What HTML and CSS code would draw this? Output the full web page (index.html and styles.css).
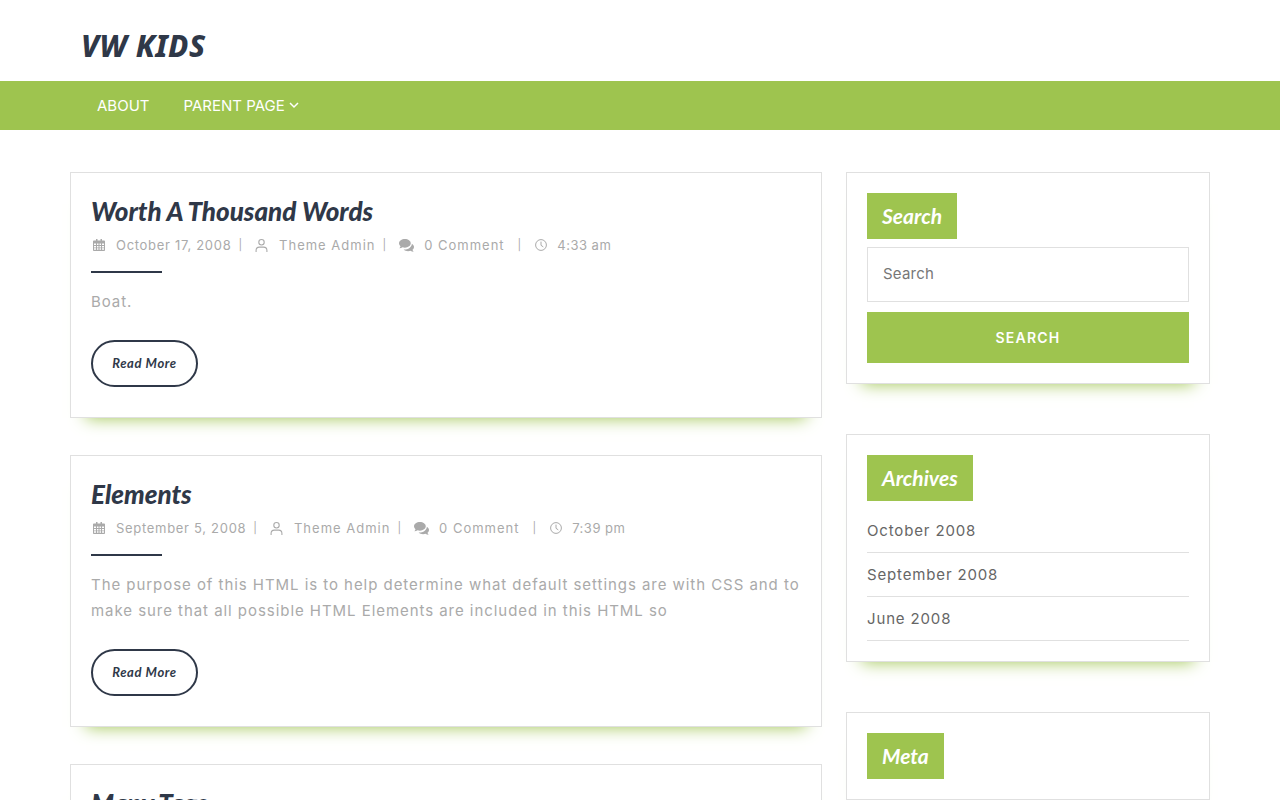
FILE: index.html
```html
<!DOCTYPE html>
<html lang="en">
<head>
    <meta charset="UTF-8">
    <meta name="viewport" content="width=device-width, initial-scale=1.0">
    <title>VW KIDS</title>
    <link rel="stylesheet" href="styles.css">
</head>
<body>
    <svg class="icon-defs" width="0" height="0">
        <symbol id="i-cal" viewBox="0 0 12 12"><path fill="currentColor" d="M3 0h1.5v1.5h3V0H9v1.5h2.2c.4 0 .8.4.8.8v8.9c0 .4-.4.8-.8.8H.8c-.4 0-.8-.4-.8-.8V2.300c0-.4.4-.8.8-.8H3zM1 4.500v1.500h2V4.500zm3 0v1.500h1.500V4.500zm2.500 0v1.500H8V4.500zm2.500 0v1.500h2V4.500zM1 7v1.500h2V7zm3 0v1.500h1.500V7zm2.500 0v1.500H8V7zM9 7v1.500h2V7zM1 9.300v1.500h2V9.300zm3 0v1.500h1.500V9.300zm2.500 0v1.500H8V9.300zm2.500 0v1.500h2V9.300z"/></symbol>
        <symbol id="i-user" viewBox="0 0 12 12"><g fill="none" stroke="currentColor" stroke-width="1"><circle cx="6" cy="3" r="2.500"/><path d="M1 12V10.500C1 8.800 2.300 7.500 4 7.500H8C9.700 7.500 11 8.800 11 10.500V12"/></g></symbol>
        <symbol id="i-comment" viewBox="0 0 14 12"><path fill="currentColor" d="M5.500 0C8.500 0 11 1.800 11 4s-2.500 4-5.500 4c-.8 0-1.500-.1-2.200-.4C2.500 8.200 1.400 8.600.3 8.600c.6-.6 1-1.300 1.100-2C.5 5.900 0 5 0 4c0-2.200 2.500-4 5.500-4z"/><path fill="currentColor" d="M12 4.300c1.200.7 2 1.800 2 3 0 1-.5 1.900-1.400 2.600.1.700.5 1.400 1.100 2-1.100 0-2.200-.4-3-1-.7.300-1.400.4-2.200.4-1.700 0-3.200-.6-4.200-1.500C8.300 10 12 7.600 12 4.300z"/></symbol>
        <symbol id="i-clock" viewBox="0 0 12 12"><g fill="none" stroke="currentColor" stroke-width="1"><circle cx="6" cy="6" r="5.400"/><path d="M6 2.600V6.300L8.300 7.900"/></g></symbol>
    </svg>

    <header class="site-header">
        <div class="container">
            <a class="logo" href="#">VW KIDS</a>
        </div>
    </header>
    <nav class="main-nav">
        <div class="container nav-list">
            <a href="#">ABOUT</a>
            <a href="#">PARENT PAGE
                <svg class="caret" viewBox="0 0 10 7" width="10" height="7"><path d="M1 1l4 4 4-4" fill="none" stroke="currentColor" stroke-width="1.500"/></svg>
            </a>
        </div>
    </nav>

    <div class="container page-grid">
        <main class="posts">
            <article class="post">
                <h2 class="post-title">Worth A Thousand Words</h2>
                <div class="post-meta">
                    <svg class="meta-icon cal"><use href="#i-cal"/></svg><span class="meta-date">October 17, 2008</span><span class="sep">|</span>
                    <svg class="meta-icon user"><use href="#i-user"/></svg><span>Theme Admin</span><span class="sep">|</span>
                    <svg class="meta-icon comment"><use href="#i-comment"/></svg><span>0 Comment</span><span class="sep long">|</span>
                    <svg class="meta-icon clock"><use href="#i-clock"/></svg><span class="meta-time">4:33 am</span>
                </div>
                <hr class="post-rule">
                <p class="post-excerpt">Boat.</p>
                <a class="read-more" href="#">Read More</a>
            </article>
            <article class="post">
                <h2 class="post-title">Elements</h2>
                <div class="post-meta">
                    <svg class="meta-icon cal"><use href="#i-cal"/></svg><span class="meta-date">September 5, 2008</span><span class="sep">|</span>
                    <svg class="meta-icon user"><use href="#i-user"/></svg><span>Theme Admin</span><span class="sep">|</span>
                    <svg class="meta-icon comment"><use href="#i-comment"/></svg><span>0 Comment</span><span class="sep long">|</span>
                    <svg class="meta-icon clock"><use href="#i-clock"/></svg><span class="meta-time">7:39 pm</span>
                </div>
                <hr class="post-rule">
                <p class="post-excerpt">The purpose of this HTML is to help determine what default settings are with CSS and to make sure that all possible HTML Elements are included in this HTML so</p>
                <a class="read-more" href="#">Read More</a>
            </article>
            <article class="post">
                <h2 class="post-title">Many Tags</h2>
            </article>
        </main>

        <aside class="sidebar">
            <section class="widget">
                <h3 class="widget-title">Search</h3>
                <form class="search-form">
                    <input type="text" placeholder="Search">
                    <button type="button">SEARCH</button>
                </form>
            </section>
            <section class="widget">
                <h3 class="widget-title">Archives</h3>
                <ul class="archive-list">
                    <li><a href="#">October 2008</a></li>
                    <li><a href="#">September 2008</a></li>
                    <li><a href="#">June 2008</a></li>
                </ul>
            </section>
            <section class="widget">
                <h3 class="widget-title">Meta</h3>
            </section>
        </aside>
    </div>
</body>
</html>
```

FILE: styles.css
```css
html, body {
    height: 800px;
    overflow: hidden;
}
body {
    margin: 0;
    background: #fff;
    font-family: Inter, "Open Sans", sans-serif;
    color: #2f3848;
}
a {
    color: inherit;
    text-decoration: none;
}
.icon-defs {
    display: block;
    height: 0;
}
.container {
    width: 1140px;
    margin: 0 auto;
}

/* header */
.site-header {
    height: 81px;
}
.logo {
    display: block;
    padding: 26px 0 0 11px;
    font-family: "Noto Sans", sans-serif;
    font-size: 30px;
    font-style: italic;
    font-weight: 800;
    line-height: 40px;
    letter-spacing: 0.5px;
}
.main-nav {
    height: 49px;
    background: #9ec44f;
}
.nav-list {
    display: flex;
    padding-left: 10px;
    box-sizing: border-box;
}
.nav-list a {
    padding: 0 17px;
    color: #fff;
    font-size: 15px;
    line-height: 49px;
}
.caret {
    vertical-align: 2px;
}

/* layout */
.page-grid {
    display: grid;
    grid-template-columns: 752px 364px;
    gap: 24px;
    padding-top: 42px;
}
.post {
    margin-bottom: 37px;
    padding: 20px;
    border: 1px solid #e0e0e0;
    box-shadow: 0 16px 16px -16px #9ec44f;
}
.post-title {
    margin: 0 0 6px;
    font-family: Lato, sans-serif;
    font-size: 26px;
    font-style: italic;
    font-weight: 900;
    line-height: 36px;
}
.post-meta {
    display: flex;
    align-items: center;
    height: 20px;
    color: #aaa;
    font-size: 13px;
    letter-spacing: 1px;
}
.meta-icon {
    flex: none;
    width: 12px;
    height: 12px;
}
.meta-icon.cal {
    margin: 0 11px 0 2px;
}
.meta-icon.user {
    width: 13px;
    height: 13px;
    margin: 0 11px 0 -1px;
}
.meta-icon.comment {
    width: 15px;
    height: 13px;
    margin: 0 10px 0 -1px;
}
.meta-icon.clock {
    margin: 0 10px 0 -1px;
}
.meta-date {
    letter-spacing: 0.7px;
}
.meta-time {
    letter-spacing: 0.5px;
}
.sep {
    margin: 0 13px 0 7px;
    font-size: 11px;
}
.sep.long {
    margin: 0 14px 0 13px;
}
.post-rule {
    width: 71px;
    height: 2px;
    margin: 16px 0 0;
    border: 0;
    background: #2f3848;
}
.post-excerpt {
    margin: 16px 0 0;
    color: #aaa;
    font-size: 15px;
    line-height: 26px;
    letter-spacing: 0.95px;
}
.read-more {
    display: inline-block;
    box-sizing: border-box;
    width: 107px;
    height: 47px;
    margin: 25px 0 10px;
    border: 2px solid #2f3848;
    border-radius: 24px;
    font-family: Lato, sans-serif;
    font-size: 13px;
    font-style: italic;
    font-weight: 700;
    line-height: 42px;
    letter-spacing: 0.6px;
    text-align: center;
}

/* sidebar */
.widget {
    margin-bottom: 50px;
    padding: 20px;
    border: 1px solid #e0e0e0;
    box-shadow: 0 16px 16px -16px #9ec44f;
}
.widget-title {
    display: inline-block;
    margin: 0;
    padding: 0 15px;
    background: #9ec44f;
    color: #fff;
    font-family: Lato, sans-serif;
    font-size: 21px;
    font-style: italic;
    font-weight: 700;
    line-height: 46px;
    vertical-align: top;
}
.search-form {
    margin-top: 8px;
}
.search-form input {
    display: block;
    box-sizing: border-box;
    width: 100%;
    height: 55px;
    padding: 0 15px 2px;
    border: 1px solid #e0e0e0;
    font: 15px Inter, sans-serif;
    letter-spacing: 0.2px;
}
.search-form input::placeholder {
    color: #777;
}
.search-form button {
    display: block;
    width: 100%;
    height: 51px;
    margin-top: 10px;
    border: 0;
    background: #9ec44f;
    color: #fff;
    font: 600 14px Inter, sans-serif;
    letter-spacing: 1.2px;
}
.archive-list {
    margin: 8px 0 0;
    padding: 0;
    list-style: none;
}
.archive-list li {
    height: 43px;
    border-bottom: 1px solid #e0e0e0;
    color: #666;
    font-size: 15px;
    line-height: 43px;
    letter-spacing: 0.85px;
}
```
